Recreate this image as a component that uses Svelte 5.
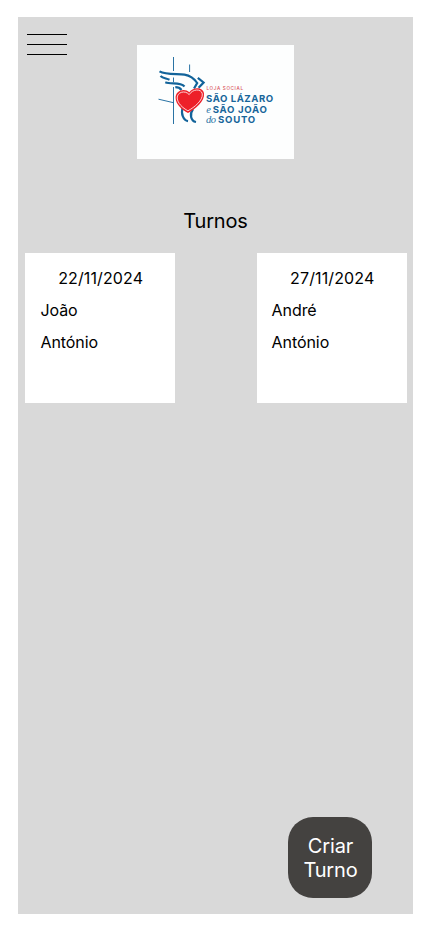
<script>
  const shifts = [
    { date: '22/11/2024', people: ['João', 'António'] },
    { date: '27/11/2024', people: ['André', 'António'] }
  ];
</script>

<main class="screen">
  <header>
    <button class="menu" aria-label="Menu"><span></span><span></span><span></span></button>
    <svg class="logo" viewBox="137 45 157 114" role="img" aria-label="Loja Social São Lázaro e São João do Souto">
      <g fill="none" stroke="#12639a">
        <g stroke-width="0.9">
          <path d="M173.5 57V71M173.5 77.5V82M173.5 87V124M189.6 64.5V72M158.5 99.2L173.5 102.7" />
        </g>
        <g stroke-width="2.2">
          <path d="M159.5 71.4C166 75.3 178 73.5 184.5 74.6C190.5 75.6 194.5 79 197.2 83L194 88.5" />
          <path d="M160.5 76C163 78.5 166 78.2 169.5 79.8" />
          <path d="M165.3 82.3C171 84.7 180 81.6 184.5 86.5" />
          <path d="M175.3 87.2C178 87.2 180 88 181.5 90" />
          <path d="M197.8 77.8L203.6 82.5L198.6 87.8" />
          <path d="M182.8 107C180.5 114 183.5 120.5 188 121.2" />
          <path d="M193 109C189.5 114 190.5 121 196 122" />
        </g>
      </g>
      <path d="M188 113C182 110 175.9 104.5 175.6 98C175.2 90.5 184.5 87.5 189.3 92.3C193 87 202.7 86.5 204 93.2C205.2 101.5 195 109 188 113Z" fill="#ed2029" />
      <path d="M187.9 110.8C182.5 107.8 177.6 103.4 177.2 98C177 92.2 185 89.7 189.2 94.6C192.7 88.8 201.2 88.4 202.3 93.9C203 100.3 194.5 107.3 187.9 110.8Z" fill="none" stroke="#fff" stroke-width="0.8" />
      <text class="small" x="206.5" y="90.4" textLength="36.5">LOJA SOCIAL</text>
      <g class="name">
        <text x="206.1" y="102.4" textLength="67">SÃO LÁZARO</text>
        <text x="212.8" y="113" textLength="54">SÃO JOÃO</text>
        <text x="218.1" y="123" textLength="37">SOUTO</text>
      </g>
      <g class="script">
        <text x="206.2" y="113">e</text>
        <text x="206" y="123" textLength="10">do</text>
      </g>
    </svg>
  </header>

  <h1>Turnos</h1>

  <section class="shifts">
    {#each shifts as shift}
      <article>
        <h2>{shift.date}</h2>
        {#each shift.people as person}
          <p>{person}</p>
        {/each}
      </article>
    {/each}
  </section>

  <button class="create">Criar Turno</button>
</main>

<style>
  :global(body) {
    background: #fff;
  }
  .screen {
    box-sizing: border-box;
    width: 395px;
    height: 897px;
    margin: 17px 0 0 18px;
    background: #d9d9d9;
    display: flex;
    flex-direction: column;
    font-family: Inter, sans-serif;
    font-weight: 400;
    color: #000;
  }
  header {
    display: flex;
    align-items: flex-start;
    height: 142px;
    padding-left: 9px;
  }
  button {
    border: 0;
    font: inherit;
  }
  .menu {
    display: flex;
    flex-direction: column;
    gap: 9px;
    width: 40px;
    padding: 0;
    margin-top: 17px;
    background: none;
  }
  .menu span {
    height: 1px;
    background: #000;
  }
  .logo {
    width: 157px;
    height: 114px;
    margin: 28px 0 0 70px;
    background: #fdfefe;
  }
  .small {
    font-size: 4.6px;
    font-weight: 500;
    fill: #d9535a;
  }
  .name {
    font-size: 9.6px;
    font-weight: 700;
    fill: #17659a;
  }
  .script {
    font: italic 10.5px 'Liberation Serif', serif;
    fill: #2873a5;
  }
  h1 {
    margin: 50px 0 0;
    height: 24px;
    font-size: 20px;
    line-height: 24px;
    font-weight: inherit;
    letter-spacing: -0.15px;
    text-align: center;
  }
  .shifts {
    display: flex;
    justify-content: space-between;
    margin-top: 20px;
    padding: 0 6px 0 7px;
  }
  article {
    box-sizing: border-box;
    width: 150px;
    height: 150px;
    padding: 9px 15px 9px 15.4px;
    background: #fff;
    font-size: 16px;
    line-height: 32px;
  }
  article:last-child {
    padding-left: 14.5px;
  }
  h2, p {
    margin: 0;
    font-size: 16px;
    font-weight: inherit;
  }
  p {
    letter-spacing: -0.05px;
  }
  h2 {
    text-align: center;
    padding-left: 1px;
    letter-spacing: 0.12px;
  }
  .create {
    width: 84px;
    height: 81px;
    margin: auto 41px 16px auto;
    padding: 0 9px 0 10px;
    border-radius: 25px;
    background: #444240;
    color: #fff;
    font-size: 20px;
    line-height: 24px;
    letter-spacing: -0.15px;
    text-align: center;
  }
</style>
